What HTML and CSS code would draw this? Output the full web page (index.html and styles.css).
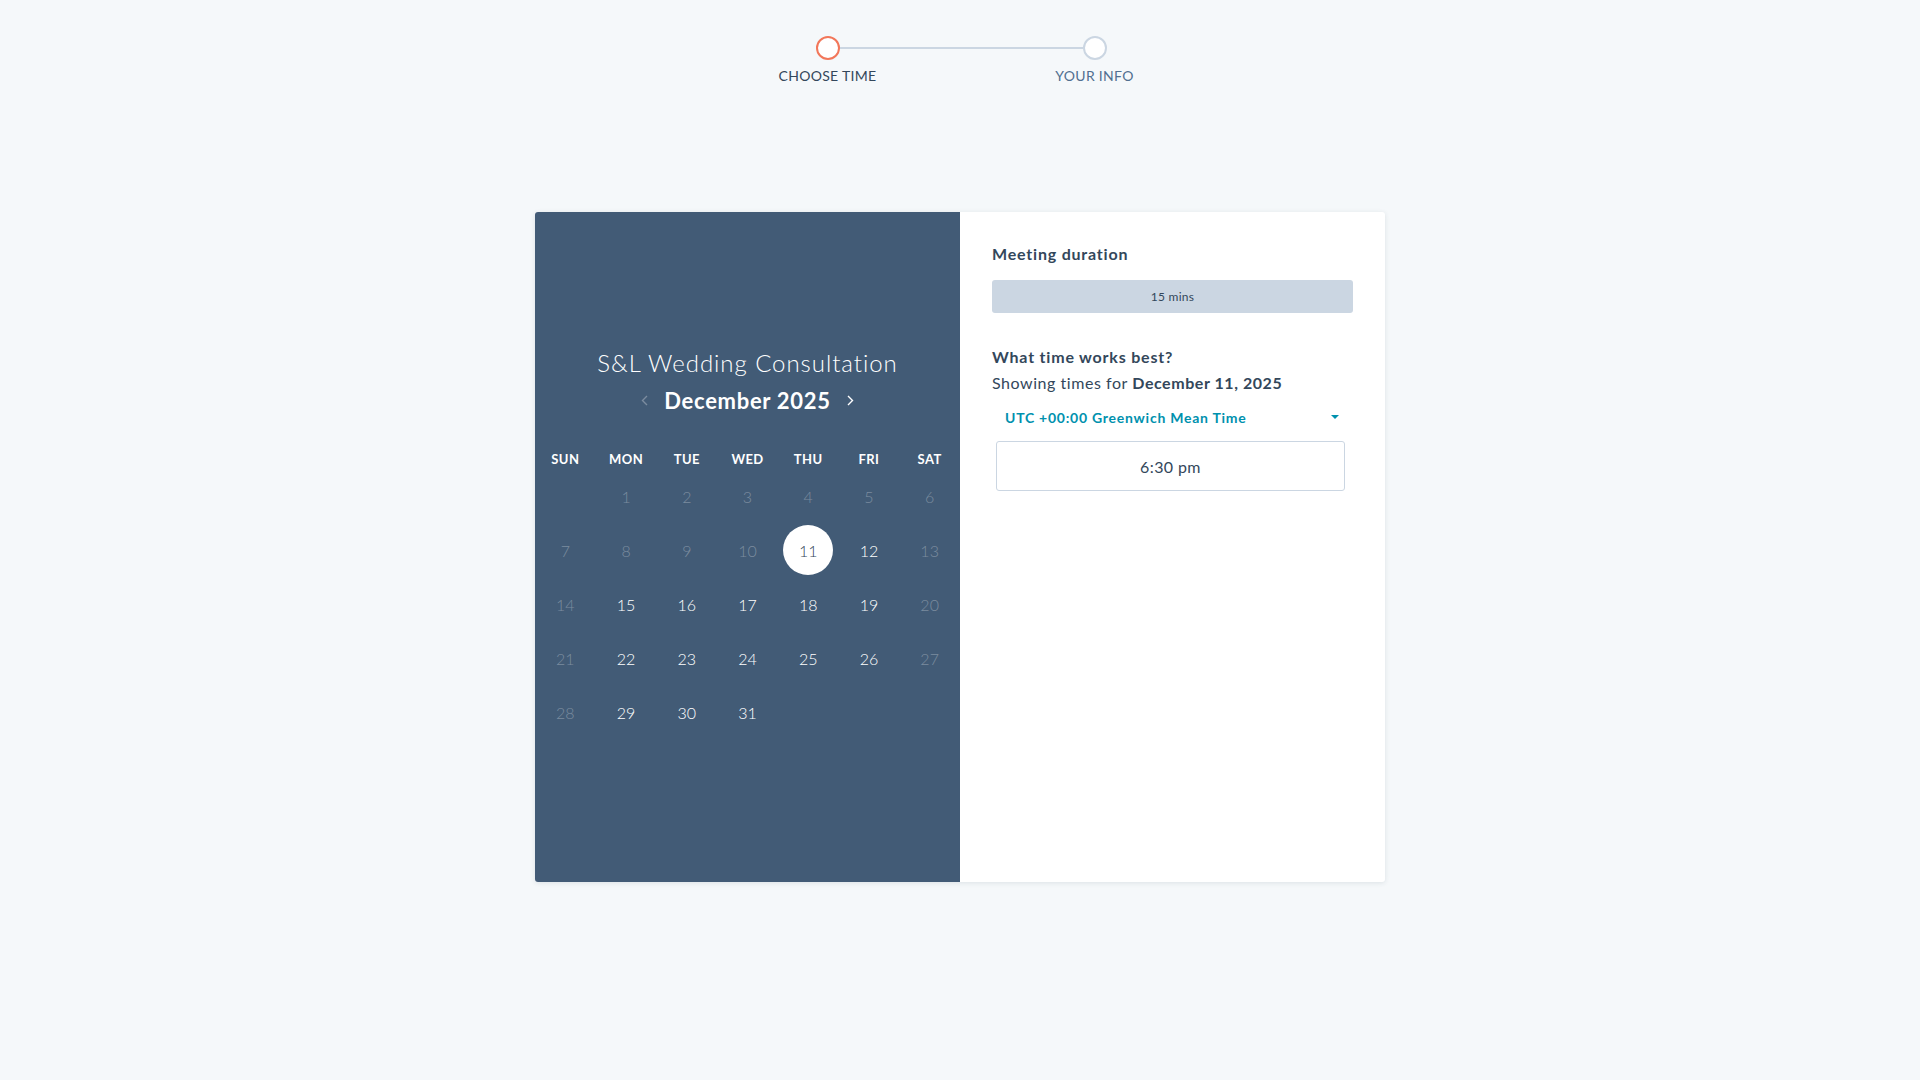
FILE: index.html
```html
<!DOCTYPE html>
<html lang="en">
<head>
<meta charset="utf-8">
<title>Book a meeting</title>
<link rel="stylesheet" href="styles.css">
</head>
<body>
<div class="stepper">
  <div class="step">
    <span class="dot dot-active"></span>
    <span class="step-label">CHOOSE TIME</span>
  </div>
  <div class="step">
    <span class="dot"></span>
    <span class="step-label">YOUR INFO</span>
  </div>
</div>

<div class="card">
  <section class="calendar">
    <h1 class="title">S&amp;L Wedding Consultation</h1>
    <div class="month-nav">
      <span class="arrow arrow-disabled">
        <svg width="7" height="11" viewBox="0 0 7 11"><path d="M6 1L1.5 5.5L6 10" fill="none" stroke="currentColor" stroke-width="1.4"/></svg>
      </span>
      <span class="month">December 2025</span>
      <span class="arrow">
        <svg width="7" height="11" viewBox="0 0 7 11"><path d="M1 1L5.5 5.5L1 10" fill="none" stroke="currentColor" stroke-width="1.4"/></svg>
      </span>
    </div>
    <div class="grid weekdays">
      <span>SUN</span><span>MON</span><span>TUE</span><span>WED</span><span>THU</span><span>FRI</span><span>SAT</span>
    </div>
    <div class="grid days">
      <span></span>
      <span class="off">1</span><span class="off">2</span><span class="off">3</span><span class="off">4</span><span class="off">5</span><span class="off">6</span>
      <span class="off">7</span><span class="off">8</span><span class="off">9</span><span class="off">10</span><span class="sel"><b>11</b></span><span>12</span><span class="off">13</span>
      <span class="off">14</span><span>15</span><span>16</span><span>17</span><span>18</span><span>19</span><span class="off">20</span>
      <span class="off">21</span><span>22</span><span>23</span><span>24</span><span>25</span><span>26</span><span class="off">27</span>
      <span class="off">28</span><span>29</span><span>30</span><span>31</span>
    </div>
  </section>
  <section class="details">
    <h2 class="heading">Meeting duration</h2>
    <div class="duration">15 mins</div>
    <h2 class="heading heading-gap">What time works best?</h2>
    <p class="showing">Showing times for <strong>December 11, 2025</strong></p>
    <div class="timezone">
      <span>UTC +00:00 Greenwich Mean Time</span>
      <span class="caret"></span>
    </div>
    <div class="slot">6:30 pm</div>
  </section>
</div>
</body>
</html>
```

FILE: styles.css
```css
* { box-sizing: border-box; }
html, body { margin: 0; padding: 0; }
body {
  background: #f5f8fa;
  font-family: Lato, "Noto Sans", sans-serif;
  color: #33475b;
  height: 1080px;
}

.stepper {
  width: 409px;
  margin: 36px auto 0;
  padding-left: 2px;
  display: flex;
  justify-content: space-between;
  position: relative;
}
.stepper::before {
  content: "";
  position: absolute;
  left: 82px;
  right: 82px;
  top: 11px;
  height: 2px;
  background: #cbd6e2;
}
.step {
  width: 140px;
  display: flex;
  flex-direction: column;
  align-items: center;
  position: relative;
}
.dot {
  width: 24px;
  height: 24px;
  border-radius: 50%;
  border: 2px solid #cbd6e2;
  background: #fff;
}
.dot-active { border-color: #f2775a; }
.step-label {
  margin-top: 7px;
  font-size: 14px;
  line-height: 18px;
  letter-spacing: 0.3px;
  color: #33475b;
}
.step:last-child .step-label { color: #516f90; }

.card {
  width: 850px;
  height: 670px;
  margin: 127px auto 0;
  display: flex;
  border-radius: 3px;
  box-shadow: 0 1px 5px rgba(45, 62, 80, 0.12);
  background: #fff;
}

.calendar {
  width: 425px;
  background: #425b76;
  border-radius: 3px 0 0 3px;
  color: #fff;
  padding-top: 136px;
}
.title {
  margin: 0;
  text-align: center;
  font-size: 24px;
  line-height: 30px;
  font-weight: 300;
  letter-spacing: 0.95px;
}
.month-nav {
  margin-top: 7px;
  display: flex;
  justify-content: center;
  align-items: center;
  gap: 16px;
  height: 30px;
}
.month {
  font-size: 22px;
  font-weight: 700;
  letter-spacing: 0.7px;
}
.arrow { display: flex; color: #fff; }
.arrow-disabled { color: #7b8c9f; }

.grid {
  display: grid;
  grid-template-columns: repeat(7, 1fr);
  text-align: center;
}
.weekdays {
  margin-top: 34px;
  font-size: 13px;
  font-weight: 700;
  line-height: 20px;
  letter-spacing: 0.4px;
}
.days {
  margin-top: 0;
  grid-auto-rows: 54px;
  font-size: 16px;
  font-weight: 300;
}
.days span {
  display: flex;
  align-items: center;
  justify-content: center;
}
.days .off { color: #7b8c9f; }
.days .sel b {
  width: 50px;
  height: 50px;
  border-radius: 50%;
  background: #fff;
  color: #33475b;
  font-weight: 300;
  display: flex;
  align-items: center;
  justify-content: center;
}

.details {
  flex: 1;
  padding: 31px 32px 0;
}
.heading {
  margin: 0;
  font-size: 16px;
  line-height: 22px;
  font-weight: 700;
  letter-spacing: 0.8px;
}
.duration {
  margin-top: 15px;
  height: 33px;
  border-radius: 3px;
  background: #cbd6e2;
  font-size: 12px;
  letter-spacing: 0.3px;
  display: flex;
  align-items: center;
  justify-content: center;
}
.heading-gap { margin-top: 33px; }
.showing {
  margin: 4px 0 0;
  font-size: 16px;
  line-height: 22px;
  letter-spacing: 0.55px;
}
.showing strong { font-weight: 700; }
.timezone {
  margin-top: 13px;
  padding: 0 14px 0 13px;
  display: flex;
  justify-content: space-between;
  align-items: center;
  height: 20px;
  color: #0091ae;
  font-size: 14px;
  font-weight: 700;
  letter-spacing: 0.75px;
}
.caret {
  width: 0;
  height: 0;
  border-left: 4px solid transparent;
  border-right: 4px solid transparent;
  border-top: 4px solid #0091ae;
}
.slot {
  margin: 14px 8px 0 4px;
  height: 50px;
  border: 1px solid #cbd6e2;
  border-radius: 3px;
  display: flex;
  align-items: center;
  justify-content: center;
  font-size: 16px;
  font-weight: 400;
  letter-spacing: 0.4px;
}
```
